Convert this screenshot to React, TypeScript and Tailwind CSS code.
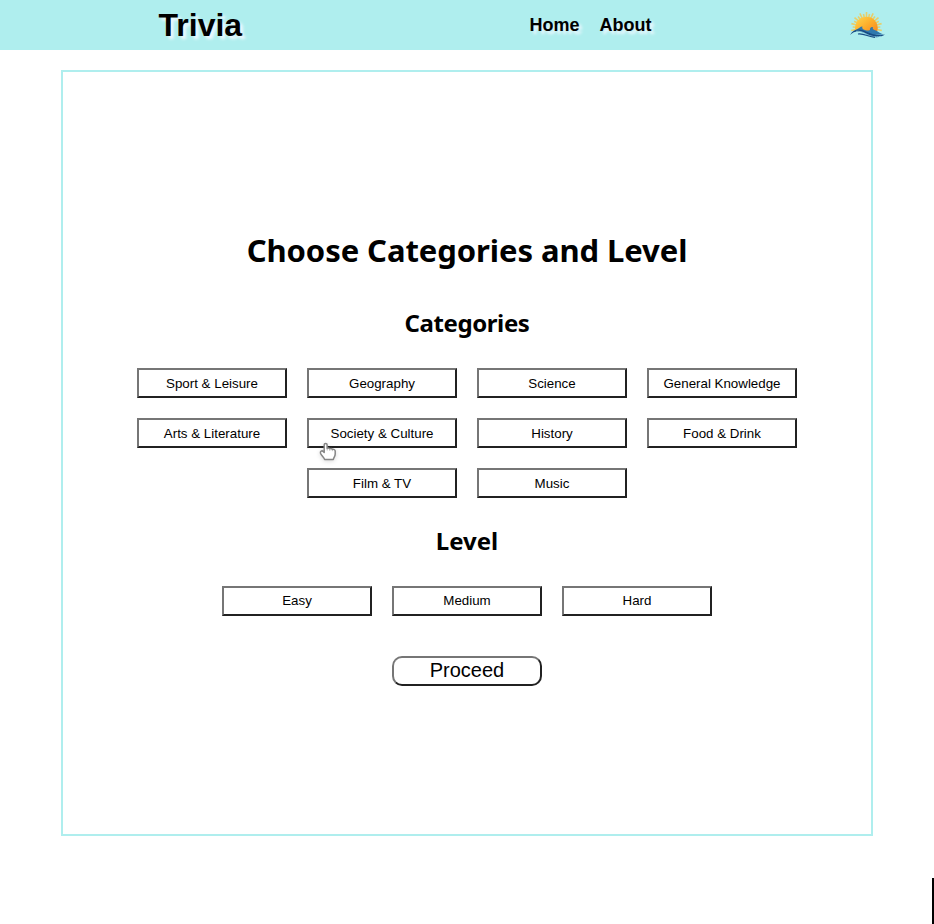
const categories = [
  'Sport & Leisure', 'Geography', 'Science', 'General Knowledge',
  'Arts & Literature', 'Society & Culture', 'History', 'Food & Drink',
  'Film & TV', 'Music',
];
const levels = ['Easy', 'Medium', 'Hard'];

const heading = "font-['Noto_Sans',sans-serif] font-bold text-black whitespace-nowrap";

function Choice({ label, raised = false }: { label: string; raised?: boolean }) {
  return (
    <button
      className={`h-[30px] w-[150px] border-2 border-t-[#767676] border-l-[#767676] border-r-[#212121] border-b-[#212121] bg-white text-[13.333px] leading-[15px] text-black ${raised ? 'pb-[2px]' : ''}`}
    >
      {label}
    </button>
  );
}

function SunLogo() {
  return (
    <svg width="36" height="26" viewBox="0 0 36 26">
      <defs>
        <linearGradient id="sun" x1="0" y1="0" x2="1" y2="1">
          <stop offset="0" stopColor="#ffd84e" />
          <stop offset="0.5" stopColor="#fdae2b" />
          <stop offset="1" stopColor="#f58220" />
        </linearGradient>
      </defs>
      <g stroke="#e6cf6c" strokeWidth="1.6">
        {Array.from({ length: 17 }, (_, i) => {
          const a = Math.PI * (0.94 + i * 0.07);
          const r = i % 2 ? 13.8 : 15.6;
          return (
            <line
              key={i}
              x1={16.5 + 10 * Math.cos(a)}
              y1={15.5 + 10 * Math.sin(a)}
              x2={16.5 + r * Math.cos(a)}
              y2={15.5 + r * Math.sin(a)}
            />
          );
        })}
      </g>
      <path d="M5.5 19A11.3 11.3 0 1 1 27.5 18L26 22Z" fill="url(#sun)" />
      <path d="M6 18C9 16.5 10 14.5 12.5 14.5C11.5 16 13 17.5 15 18C17 18.5 18 19 20 18C19.500 16 21 14.500 23 15C22 17 24 18 26 18.500C28 20 31 21.500 34 22.500L24 23C17 22 11 19 6 18Z" fill="#2f78ad" />
      <path d="M0 23C3 17.500 8 16.300 13 18.300C19 20.500 24 24.500 35 22.600C28 27 22 25 17 22.500C11 19 5 18 0 23Z" fill="#174b83" />
      <path d="M6 19.300C12 18.500 16 22.500 21 24C25 25 28 25 31 24.300" fill="none" stroke="#8fd8ea" strokeWidth="0.8" />
      <path d="M8 22C14 21 18 24.800 25 25.400" fill="none" stroke="#174b83" strokeWidth="1.2" />
    </svg>
  );
}

function HandCursor() {
  return (
    <svg className="pointer-events-none absolute top-[24px] left-[12px] drop-shadow-sm" width="18" height="20" viewBox="0 0 18 20">
      <path
        d="M5.200 10.500V2.800C5.200 0.900 8.100 0.900 8.100 2.800V6.400C9.200 5.700 10.300 6 10.700 6.800C11.800 6.200 12.900 6.500 13.300 7.400C14.600 7 16.200 7.700 16.200 9V12C16.200 14.500 14.600 15.200 14.300 17.500H5.600C5.300 15.500 2.300 13.800 1.500 11.300C0.900 9.200 3 8.300 4.100 9.400Z"
        fill="#fff" stroke="#858585" strokeWidth="1.5" strokeLinejoin="round"
      />
      <path d="M8.200 6.700V8.500M10.800 7.200V8.800M13.300 7.800V9.200" stroke="#aaa" strokeWidth="0.8" />
    </svg>
  );
}

export default function App() {
  return (
    <div className="relative h-[924px] overflow-hidden bg-white font-['Liberation_Sans',Arial,sans-serif] text-black">
      <header className="flex h-[50px] items-center bg-[#afeeee] font-bold">
        <h1 className="ml-[158.500px] w-[371px] text-[32px] leading-[50px] [text-shadow:3px_3px_3px_#f0f8ff]">Trivia</h1>
        <nav className="flex w-[320px] gap-5 text-[18px] leading-[50px] [text-shadow:3px_3px_3px_#f0f8ff]">
          <a>Home</a>
          <a>About</a>
        </nav>
        <SunLogo />
      </header>

      <main className="mx-auto mt-5 flex h-[766px] w-[812px] flex-col items-center border-2 border-[#afeeee] pt-[156px]">
        <h2 className={`${heading} text-[31px] leading-[44px] tracking-[-0.07px]`}>Choose Categories and Level</h2>
        <h3 className={`${heading} mt-[37px] text-[24px] leading-[28px] tracking-[-0.4px]`}>Categories</h3>
        <div className="mt-[31px] flex w-[680px] flex-wrap justify-center gap-5">
          {categories.map((name) =>
            name === 'Society & Culture' ? (
              <div key={name} className="relative h-[30px]">
                <Choice label={name} />
                <HandCursor />
              </div>
            ) : (
              <Choice key={name} label={name} />
            ),
          )}
        </div>
        <h3 className={`${heading} mt-[29px] text-[24px] leading-[28px]`}>Level</h3>
        <div className="mt-[31px] flex gap-5">
          {levels.map((name) => <Choice key={name} label={name} raised />)}
        </div>
        <button className="mt-10 h-[30px] w-[150px] rounded-[10px] border-2 border-t-[#767676] border-l-[#767676] border-r-[#212121] border-b-[#212121] bg-white pb-[2px] text-[20px] leading-[24px]">
          Proceed
        </button>
      </main>
      <div className="absolute right-0 bottom-0 h-[46px] w-[2px] bg-black" />
    </div>
  );
}
